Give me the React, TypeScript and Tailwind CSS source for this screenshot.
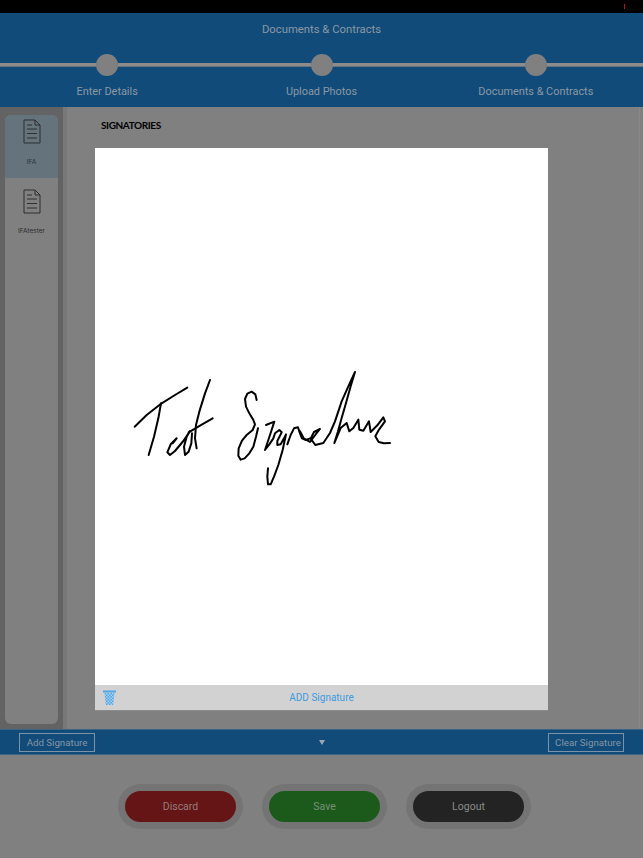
const steps = ['Enter Details', 'Upload Photos', 'Documents & Contracts'];

const actions = [
  { label: 'Discard', color: 'bg-[#651515] text-[#967c7c]' },
  { label: 'Save', color: 'bg-[#1c5a1c] text-[#769076]' },
  { label: 'Logout', color: 'bg-[#232323] text-[#8a8a8a]' },
];

function DocIcon() {
  return (
    <svg width="18" height="25" viewBox="0 0 18 25" fill="none" stroke="#2e2e2e" strokeWidth="1">
      <path d="M1 1H12L17 6V24H1Z" />
      <path d="M12 1V6H17" />
      <path d="M4 6H9M4 10H14M4 14.500H14M4 19H14" />
    </svg>
  );
}

function TrashIcon() {
  return (
    <svg width="13" height="15" viewBox="0 0 13 15">
      <defs>
        <pattern id="mesh" width="3" height="3" patternUnits="userSpaceOnUse">
          <rect width="3" height="3" fill="#4ea6e6" />
          <rect width="1.500" height="1.500" fill="#a9d2ef" />
          <rect x="1.500" y="1.500" width="1.500" height="1.500" fill="#a9d2ef" />
        </pattern>
      </defs>
      <path d="M1.500 3H11.500L10.200 15H2.800Z" fill="url(#mesh)" />
      <rect x="0" y="0.500" width="13" height="2" fill="#4ea6e6" />
    </svg>
  );
}

function SignatureDrawing() {
  return (
    <svg className="h-full w-full" viewBox="95 148 453 537" fill="none" stroke="#000" strokeLinecap="round" strokeLinejoin="round">
      <g transform="translate(130 375) scale(0.3333)" strokeWidth="6">
        <path d="M14 155L50 120L95 85L135 60L172 38" />
        <path d="M93 85L85 130L72 185L56 240" />
        <path d="M128 205L140 190L122 208L112 232L120 240L135 228L160 198L180 168L170 185L162 215L165 240L176 230L184 205L186 175" />
        <path d="M240 15L225 55L208 110L198 150L195 190L200 220" />
        <path d="M176 172L210 152L248 130" />
      </g>
      <g transform="translate(230 385) scale(0.3333)" strokeWidth="6">
        <path d="M80 45L76 28L65 20L52 26L45 42L48 65L58 85L70 105L75 118L68 135L50 150L36 167L26 190L25 212L32 224L44 220L58 205L70 185L78 155L84 130" />
        <path d="M108 120L133 110L120 150L105 195L118 178L130 160L135 145L148 135L155 142L142 168L142 180L152 178L162 160L168 148L158 195L145 240L132 275L122 298L114 298L112 275L114 250" />
        <path d="M172 178L182 150L192 130L204 127L210 145L216 160L228 165L240 160" />
      </g>
      <g transform="translate(300 368) scale(0.3333)" strokeWidth="6">
        <path d="M0 190L12 212L30 222L48 198L60 183L42 192L32 212L46 231L70 225L90 195L105 160L125 100L145 55L165 12L152 55L138 105L125 150L114 190L103 225L122 180L140 165L148 190L160 180L175 155L178 185L190 188L207 160L212 192L232 172L250 148L255 160L235 188L226 205L236 222L252 226L270 225" />
      </g>
    </svg>
  );
}

export default function App() {
  return (
    <div className="flex h-[858px] w-[643px] flex-col overflow-hidden bg-[#808080] font-['Roboto',sans-serif]">
      <div className="flex h-[13px] items-center justify-end bg-black pr-[18px]">
        <div className="h-[5px] w-px bg-[#c01020]" />
      </div>

      <header className="flex h-[94px] flex-col bg-[#114b7a] text-[#8b98a2]">
        <h1 className="pt-[10px] text-center text-[11.300px] leading-[14px]">Documents &amp; Contracts</h1>
        <div className="mt-[17px] grid grid-cols-3">
          {steps.map((step) => (
            <div key={step} className="flex flex-col items-center">
              <div className="flex w-full items-center">
                <div className="h-[4px] flex-1 border-b border-[#66727c] bg-[#8c8c8c]" />
                <div className="h-[22px] w-[22px] rounded-full bg-[#808080]" />
                <div className="h-[4px] flex-1 border-b border-[#66727c] bg-[#8c8c8c]" />
              </div>
              <span className="mt-[9px] text-[10.900px] leading-[14px]">{step}</span>
            </div>
          ))}
        </div>
      </header>

      <div className="flex h-[622px]">
        <aside className="flex w-[63px] bg-[#636363] px-[5px] pt-[8px] pb-[5px]">
          <div className="flex w-full flex-col overflow-hidden rounded-[6px] bg-[#808080]">
            <div className="flex h-[63px] flex-col items-center bg-[#64737c] pt-[4px]">
              <DocIcon />
              <span className="mt-[14px] font-['Inter',sans-serif] text-[6.500px] leading-[8px] text-[#2f3335]">IFA</span>
            </div>
            <div className="flex flex-col items-center pt-[11px]">
              <DocIcon />
              <span className="mt-[13px] font-['Inter',sans-serif] text-[6.500px] leading-[8px] text-[#2c2c2c]">IFAtester</span>
            </div>
          </div>
        </aside>
        <div className="w-[4px] bg-[#787878]" />

        <main className="mr-[3px] flex-1 border-r border-[#888888] pl-[28px]">
          <h2 className="ml-[6px] pt-[11px] font-['Lato',sans-serif] text-[10px] leading-[14px] font-bold tracking-[-0.4px] text-black">SIGNATORIES</h2>
          <div className="mt-[16px] flex w-[453px] flex-col">
            <div className="h-[537px] bg-white">
              <SignatureDrawing />
            </div>
            <div className="relative flex h-[26px] items-center justify-center border-b border-[#8c8c8c] bg-[#d2d2d2]">
              <div className="absolute top-[5px] left-[8px]">
                <TrashIcon />
              </div>
              <span className="text-[10px] text-[#3d9be0]">ADD Signature</span>
            </div>
          </div>
        </main>
      </div>

      <div className="flex h-[26px] items-center justify-between border-y border-[#3a6485] bg-[#114b7a] px-[19px] text-[9.700px] text-[#8595a2]">
        <button className="h-[19px] w-[76px] border border-[#7c93a6] leading-[17px]">Add Signature</button>
        <svg width="6" height="5" viewBox="0 0 6 5" className="mt-[1px]">
          <path d="M0 0H6L3 5Z" fill="#a0a8ae" />
        </svg>
        <button className="h-[19px] w-[76px] border border-[#7c93a6] pl-[4px] leading-[17px]">Clear Signature</button>
      </div>

      <div className="flex flex-1 justify-center gap-[19px] pt-[29px] pl-[6px]">
        {actions.map((action) => (
          <div key={action.label} className="flex h-[45px] w-[125px] items-center justify-center rounded-full bg-[#747474]">
            <button className={`h-[31px] w-[111px] rounded-full pt-[1px] text-[10.500px] ${action.color}`}>{action.label}</button>
          </div>
        ))}
      </div>
    </div>
  );
}
